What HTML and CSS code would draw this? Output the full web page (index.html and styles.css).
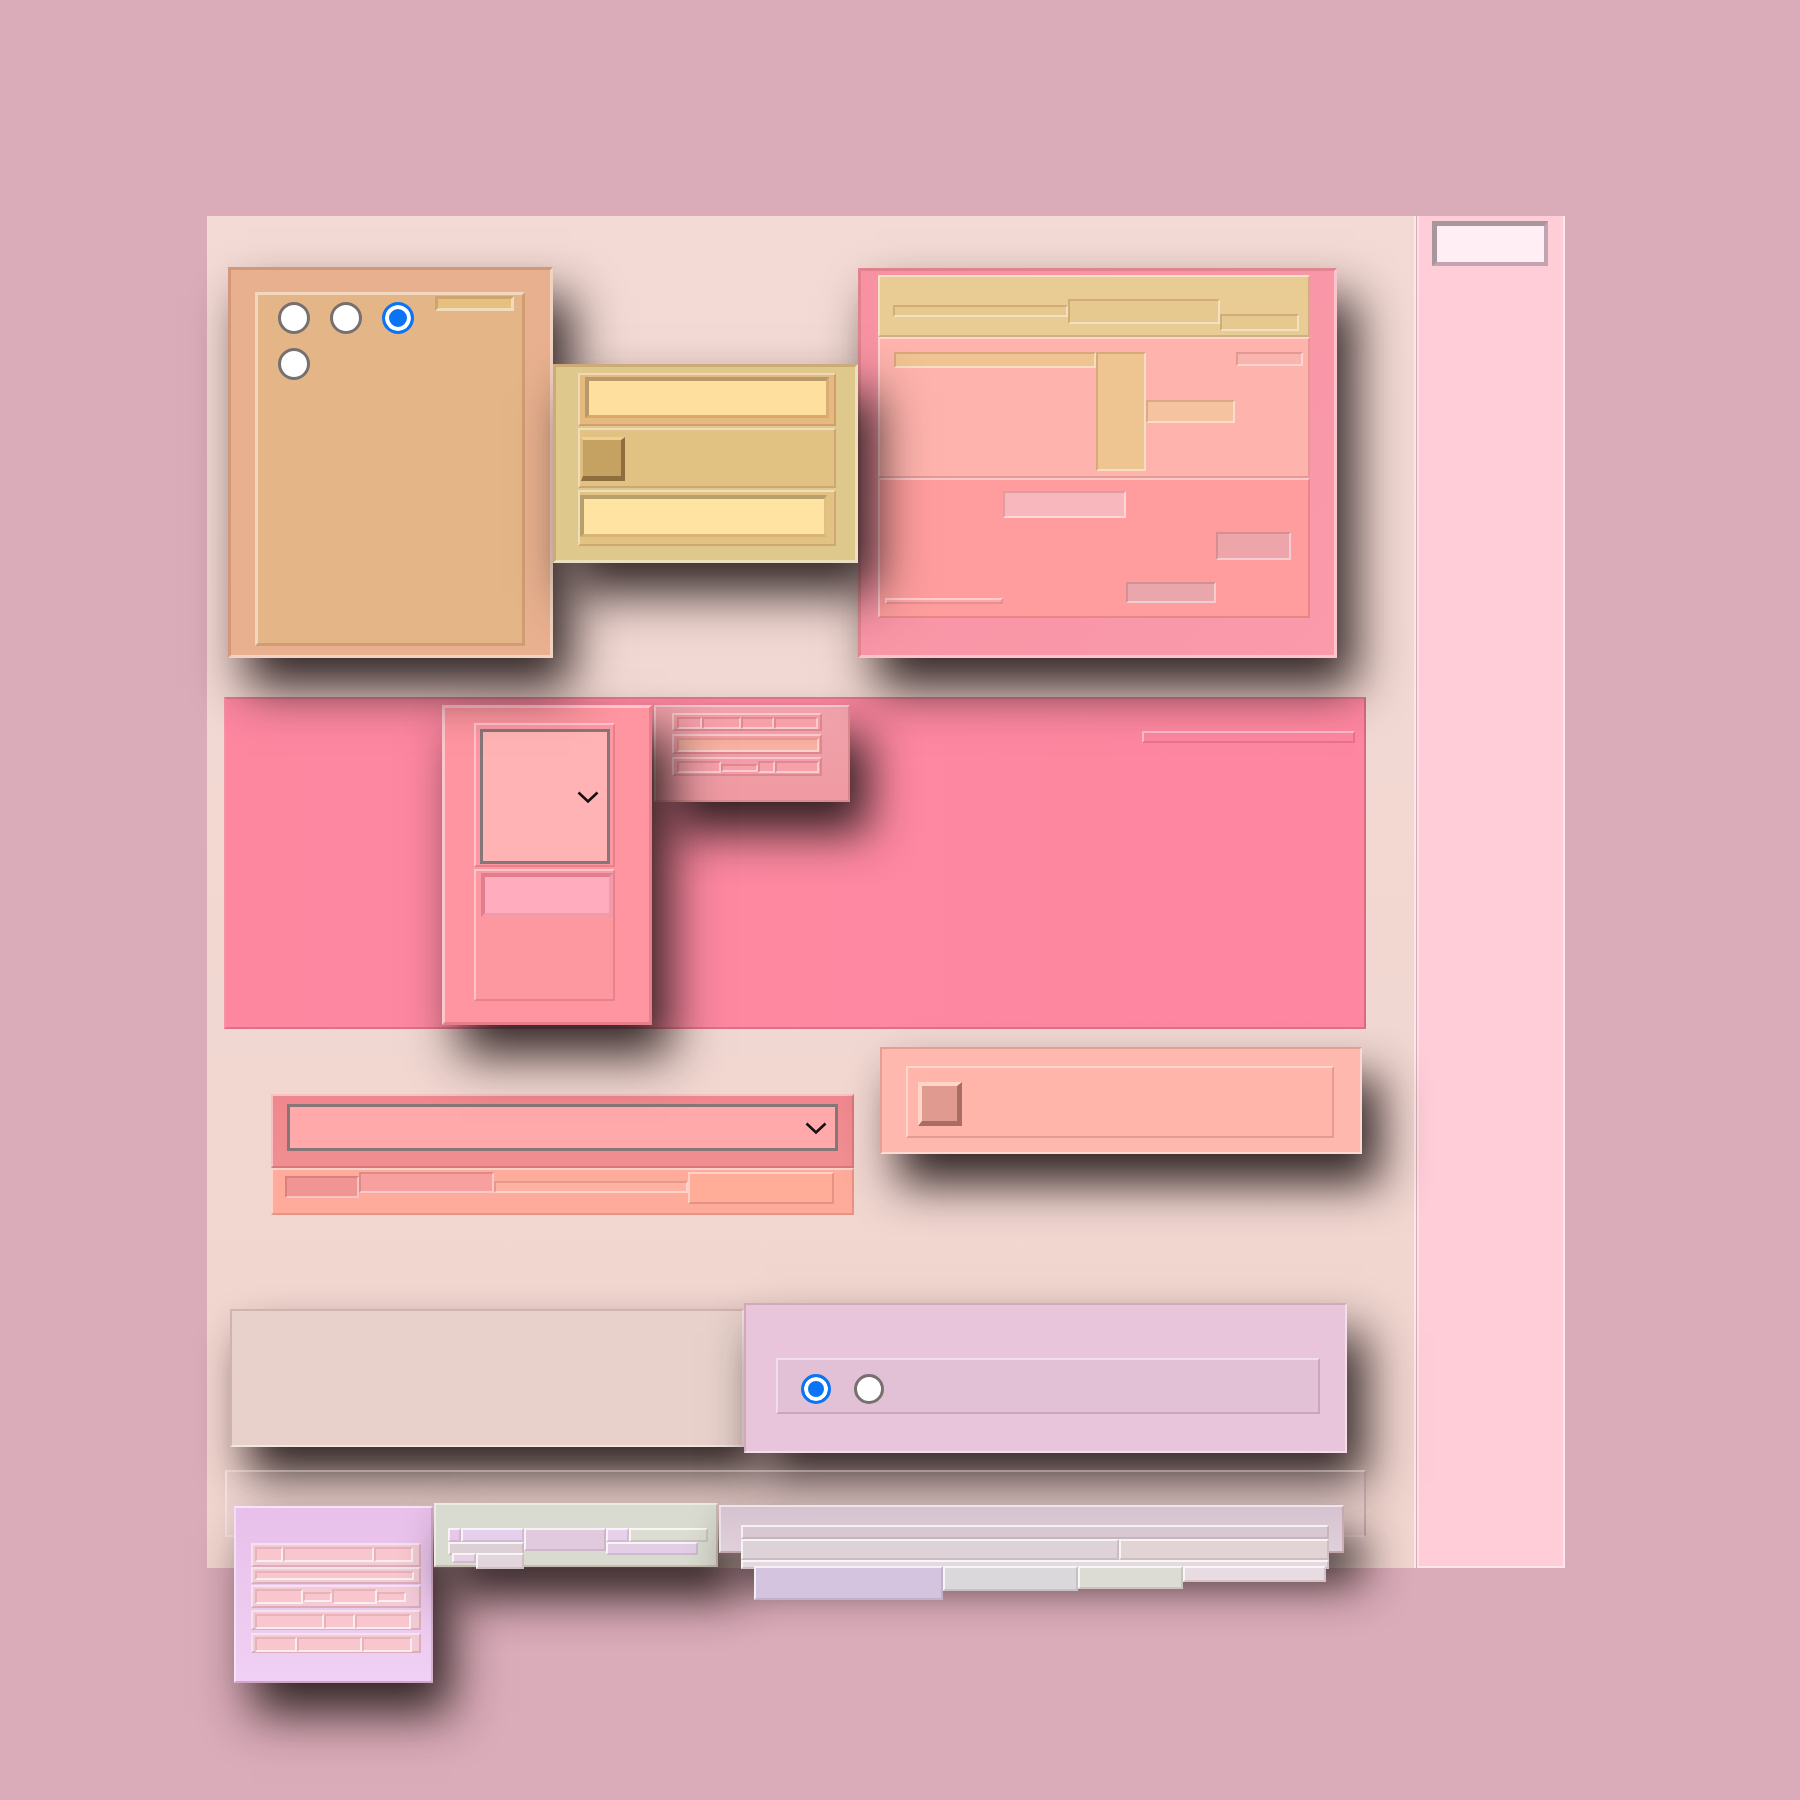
FILE: index.html
```html
<!DOCTYPE html>
<html>
<head>
<meta charset="utf-8">
<title>Panels</title>
<link rel="stylesheet" href="styles.css">
</head>
<body>
<div class="stage">
  <div class="canvas">
    <div class="row1">
      <div class="orange in b3 sh z3">
        <div class="panel-o out b3">
          <div class="radios">
            <span class="radio"></span><span class="radio"></span><span class="radio on"></span><span class="radio"></span>
          </div>
          <div class="obar in b3"></div>
        </div>
      </div>
      <div class="yellow in b3 sh z4">
        <div class="yrow yr1 out b2"><div class="yinput"></div></div>
        <div class="yrow yr2 out b2"><div class="check ychk"></div></div>
        <div class="yrow yr3 out b2"><div class="yinput yi3"></div></div>
      </div>
      <div class="red in b3 sh z3">
        <div class="rhead out b2">
          <div class="bar in hb1"></div><div class="bar in hb2"></div><div class="bar in hb3"></div>
        </div>
        <div class="rmid out b2">
          <div class="bar in mb1"></div><div class="bar in mb2"></div><div class="bar in mb3"></div><div class="bar in mb4"></div>
        </div>
        <div class="rbot out b2">
          <div class="bar out bb1"></div><div class="bar in bb2"></div><div class="bar in bb3"></div><div class="bar in bb4"></div>
        </div>
      </div>
    </div>

    <div class="band">
      <div class="icard out b3 sh">
        <div class="sframe out b2">
          <div class="select sel1">
            <svg class="chev" width="24" height="14" viewBox="0 0 24 14"><path d="M2.5 2.5 L12 11.5 L21.5 2.5" fill="none" stroke="#161010" stroke-width="2.6"/></svg>
          </div>
        </div>
        <div class="lframe out b2"><div class="linput"></div></div>
      </div>
      <div class="scard out b2 sh">
        <div class="srow out b2 sr1">
          <div class="bar in s25"></div><div class="bar in s39"></div><div class="bar in s33"></div><div class="bar in s44"></div>
        </div>
        <div class="srow out b2 sr2">
          <div class="bar in s142 sorange"></div>
        </div>
        <div class="srow out b2 sr3">
          <div class="bar in s44"></div><div class="bar in s37 sthin"></div><div class="bar in s17"></div><div class="bar in s44"></div>
        </div>
      </div>
      <div class="bbar out b2"></div>
    </div>

    <div class="row3">
      <div class="selgrp">
        <div class="sgtop out b2">
          <div class="select sel2">
            <svg class="chev" width="24" height="14" viewBox="0 0 24 14"><path d="M2.5 2.5 L12 11.5 L21.5 2.5" fill="none" stroke="#161010" stroke-width="2.6"/></svg>
          </div>
        </div>
        <div class="sgbot out b2">
          <div class="bar in g1"></div><div class="bar in g2"></div><div class="bar in g3"></div><div class="bar out g4"></div>
        </div>
      </div>
      <div class="ccard in b2 sh z2">
        <div class="cframe out b2"><div class="check cchk"></div></div>
      </div>
    </div>

    <div class="row4">
      <div class="beige in b2 sh z2"></div>
      <div class="lav in b2 sh z2">
        <div class="lframe2 out b2">
          <span class="radio r30 on"></span><span class="radio r30"></span>
        </div>
      </div>
    </div>

    <div class="row5">
      <div class="pcard out b2 sh">
        <div class="prow out b2 p1"><div class="bar in pb w28"></div><div class="bar in pb w91"></div><div class="bar in pb w39"></div></div>
        <div class="prow out b2 p2"><div class="bar in pb w159"></div></div>
        <div class="prow out b2 p3"><div class="bar in pb w48"></div><div class="bar in pb w29 pth"></div><div class="bar in pb w45"></div><div class="bar in pb w29 pth"></div></div>
        <div class="prow out b2 p4"><div class="bar in pb w69"></div><div class="bar in pb w31"></div><div class="bar in pb w56"></div></div>
        <div class="prow out b2 p5"><div class="bar in pb w42"></div><div class="bar in pb w65"></div><div class="bar in pb w50"></div></div>
      </div>
      <div class="gcard out b2 sh">
        <div class="gcol1">
          <div class="gline"><div class="bar out ga1"></div><div class="bar out ga2"></div></div>
          <div class="bar out gb1"></div>
          <div class="gline gc"><div class="bar out gc1"></div><div class="bar out gc2"></div></div>
        </div>
        <div class="bar out gcol2"></div>
        <div class="gcol3">
          <div class="gline"><div class="bar out ga3"></div><div class="bar out ga4"></div></div>
          <div class="bar out gb3"></div>
        </div>
      </div>
      <div class="lcard out b2 sh">
        <div class="bar out la"></div>
        <div class="gline"><div class="bar out lb1"></div><div class="bar out lb2"></div></div>
        <div class="bar out lc"></div>
        <div class="gline ld"><div class="bar out ld1"></div><div class="bar out ld2"></div><div class="bar out ld3"></div><div class="bar out ld4"></div></div>
      </div>
    </div>
  </div>
  <div class="sidebar">
    <div class="sbox"></div>
  </div>
</div>
</body>
</html>
```
FILE: styles.css
```css
* { box-sizing: border-box; }
html, body { margin: 0; padding: 0; }
body {
  width: 1800px; height: 1800px; overflow: hidden;
  background: #daabb8;
  font-family: "Liberation Sans", Arial, sans-serif;
}
.stage { display: flex; align-items: flex-start; padding: 216px 0 0 207px; gap: 1px; }
.canvas {
  position: relative; z-index: 0;
  width: 1209px; height: 1352px;
  background: linear-gradient(180deg, #f3dad4, #f1d5cf);
  border-right: 2px solid #fbe9e5;
}
.sidebar {
  width: 148px; height: 1352px;
  background: #fecdd7;
  border-left: 2px solid #ffdfe5; border-right: 2px solid #ffe6ec; border-bottom: 2px solid #ffe6ec;
  padding: 5px 0 0 13px;
}
.sbox {
  width: 116px; height: 45px; background: #ffeef4;
  border-style: solid; border-width: 5px 4px 4px 5px;
  border-color: #a8969e #c2a4b0 #c2a4b0 #a8969e;
}

/* bevels */
.out { border-style: solid; border-color: rgba(255,255,255,.45) rgba(110,30,20,.17) rgba(110,30,20,.17) rgba(255,255,255,.45); }
.in  { border-style: solid; border-color: rgba(110,30,20,.17) rgba(255,255,255,.45) rgba(255,255,255,.45) rgba(110,30,20,.17); }
.b2 { border-width: 2px; }
.b3 { border-width: 3px; }
.bar { border-width: 2px; }
.sh { position: relative; box-shadow: 18px 30px 46px rgba(34,24,24,.92); }
.z2 { z-index: 2; } .z3 { z-index: 3; } .z4 { z-index: 4; }

/* radios */
.radio { display: block; width: 32px; height: 32px; border-radius: 50%; background: #fff; border: 3px solid #767070; }
.radio.on { border: 3px solid #0b74f4; background: #0b74f4; box-shadow: inset 0 0 0 4px #fff; }
.radio.r30 { width: 30px; height: 30px; }

/* checkbox */
.check { width: 44px; height: 44px; border-style: solid; }
.ychk { background: #c6a262; border-width: 3px 4px 5px 2px; border-color: #ecd096 #8e6e3e #8e6e3e #dcbc7c; }
.cchk { background: #e09a90; border-width: 4px 5px 5px 4px; border-color: #ffd6c6 #a86e66 #a86e66 #ffd6c6; }

/* select */
.select { display: flex; align-items: center; justify-content: flex-end; border: 3px solid #857777; padding-right: 7px; }
.chev { display: block; }

/* row 1 */
.row1 { display: flex; align-items: flex-start; margin: 51px 0 0 21px; }
.orange { width: 325px; height: 391px; background: #e8b08e; padding: 22px 0 0 24px; }
.panel-o { width: 270px; height: 354px; background: #e4b687; display: flex; align-items: flex-start; padding: 1px 0 0 20px; }
.radios { display: grid; grid-template-columns: repeat(3, 32px); column-gap: 20px; row-gap: 14px; margin-top: 6px; }
.obar { width: 79px; height: 15px; margin-left: 21px; background: #e5c080; }

.yellow { width: 305px; height: 199px; margin-top: 97px; background: #dfc88c; padding: 6px 0 0 22px; display: flex; flex-direction: column; gap: 2px; }
.yrow { width: 258px; }
.yr1 { height: 53px; padding: 2px 0 0 5px; background: #e6b97e; }
.yr2 { height: 60px; padding: 7px 0 0 1px; background: #e2c282; }
.yr3 { height: 56px; padding: 3px 0 0 0; background: #e2c384; }
.yinput {
  width: 244px; height: 41px; background: #ffdf9e;
  border-style: solid; border-width: 4px 3px 3px 4px;
  border-color: #b89a68 #d6ae78 #d8a86c #b89a68;
}
.yi3 { width: 247px; height: 42px; background: #ffe3a2; border-color: #b8a06a #e2c080 #d8b478 #b8a06a; }

.red { width: 479px; height: 390px; margin-top: 1px; background: linear-gradient(135deg, #f892a2, #fa9aab); padding: 4px 0 0 17px; }
.rhead { width: 432px; height: 62px; background: #e8cc94; display: flex; align-items: flex-start; padding-left: 13px; }
.rhead .bar { background: #e6c98f; }
.hb1 { width: 175px; height: 12px; margin-top: 28px; }
.hb2 { width: 152px; height: 25px; margin-top: 22px; }
.hb3 { width: 79px; height: 17px; margin-top: 37px; }
.rmid { width: 432px; height: 141px; background: #ffb3ad; display: flex; align-items: flex-start; padding: 13px 0 0 14px; }
.mb1 { width: 202px; height: 16px; background: #f0c393; }
.mb2 { width: 50px; height: 119px; background: #eec491; }
.mb3 { width: 89px; height: 23px; margin-top: 48px; background: #f6c3a0; }
.mb4 { width: 67px; height: 14px; margin-left: 1px; background: #f9b4ae; }
.rbot { width: 432px; height: 140px; background: #ff9d9e; display: flex; align-items: flex-start; padding-left: 5px; }
.bb1 { width: 118px; height: 6px; margin-top: 118px; background: #ffa6a6; }
.bb2 { width: 123px; height: 27px; margin-top: 11px; background: #f8b7bc; }
.bb3 { width: 90px; height: 21px; margin-top: 102px; background: #e9a7ac; }
.bb4 { width: 75px; height: 28px; margin-top: 52px; background: #eea5aa; }

/* band */
.band {
  position: relative; z-index: 1;
  width: 1142px; height: 332px; margin: 39px 0 0 17px;
  background: linear-gradient(90deg, #fe87a0, #fd88a0 50%, #ff86a0);
  border: 2px solid; border-color: #e67890 #d86a82 #e0708a #f392a8;
  display: flex; align-items: flex-start; padding: 6px 0 0 216px;
}
.icard { z-index: 2; width: 210px; height: 320px; background: #fe95a0; padding: 15px 0 0 29px; }
.sframe { width: 141px; height: 144px; padding: 4px 0 0 4px; background: #fe97a2; }
.sel1 { width: 130px; height: 135px; background: #ffb3b4; }
.lframe { width: 141px; height: 132px; margin-top: 2px; padding: 2px 0 0 5px; background: #fe98a0; }
.linput {
  width: 132px; height: 44px; background: #ffacbe;
  border-style: solid; border-width: 4px;
  border-color: #e07e8e #f39aa8 #f39aa8 #e07e8e;
}
.scard { z-index: 1; width: 196px; height: 97px; margin-left: 2px; background: linear-gradient(180deg, #f0a2aa, #f09aa3); padding: 6px 0 0 16px; display: flex; flex-direction: column; gap: 3px; }
.srow { width: 150px; display: flex; align-items: flex-start; padding: 2px 0 0 3px; background: #f59ca6; }
.sr1 { height: 18px; } .sr2 { height: 20px; } .sr3 { height: 19px; }
.srow .bar { height: 12px; background: #f6a0aa; }
.s25 { width: 25px; } .s39 { width: 39px; } .s33 { width: 33px; } .s44 { width: 44px; } .s37 { width: 37px; } .s17 { width: 17px; }
.s142 { width: 142px; }
.sorange { height: 14px !important; background: linear-gradient(180deg, #f6aca0, #f8b4a2) !important; }
.sthin { height: 8px !important; margin-top: 3px; }
.bbar { width: 213px; height: 12px; margin: 26px 9px 0 auto; background: #fe86a0; }

/* row 3 */
.row3 { display: flex; align-items: flex-start; margin: 18px 0 0 64px; }
.selgrp { width: 583px; margin-top: 47px; }
.sgtop { height: 74px; background: linear-gradient(180deg, #ef888e, #f08e92); padding: 8px 0 0 14px; }
.sel2 { width: 551px; height: 47px; background: #ffa9aa; }
.sgbot { height: 47px; background: #ffab9c; display: flex; align-items: flex-start; padding-left: 12px; }
.g1 { width: 74px; height: 22px; margin-top: 6px; background: #f09494; }
.g2 { width: 135px; height: 21px; margin-top: 2px; background: #f8a0a0; }
.g3 { width: 194px; height: 12px; margin-top: 11px; background: #ffb2a2; }
.g4 { width: 146px; height: 32px; margin-top: 2px; background: #ffac98; }
.ccard { width: 482px; height: 107px; margin-left: 26px; background: #feb8ae; padding: 17px 0 0 24px; }
.cframe { width: 428px; height: 72px; background: #ffb5aa; padding: 14px 0 0 10px; }

/* row 4 */
.row4 { display: flex; align-items: flex-start; margin: 88px 0 0 23px; }
.beige { width: 514px; height: 138px; margin-top: 6px; background: #e8d1cb; }
.lav { width: 603px; height: 150px; background: #e8c5da; padding: 53px 0 0 30px; }
.lframe2 { width: 544px; height: 56px; background: #e2c1d6; display: flex; align-items: flex-start; gap: 23px; padding: 14px 0 0 23px; }

/* row 5 */
.row5 {
  position: relative; z-index: 3;
  width: 1141px; height: 67px; margin: 17px 0 0 18px;
  display: flex; align-items: flex-start; padding-left: 7px;
  background: rgba(255,240,245,.10);
  border: 2px solid; border-color: rgba(255,235,240,.35) rgba(150,110,120,.35) rgba(255,235,240,.55) rgba(255,235,240,.55);
}
.pcard { width: 199px; height: 177px; margin-top: 34px; background: linear-gradient(180deg, #e8c0ea, #f0d0f4); padding: 35px 0 0 15px; display: flex; flex-direction: column; }
.prow { width: 170px; display: flex; align-items: flex-start; padding: 2px 0 0 2px; background: #f2cad8; }
.p1 { height: 24px; } .p2 { height: 17px; } .p3 { height: 23px; margin-top: 1px; } .p4 { height: 20px; margin-top: 2px; } .p5 { height: 20px; margin-top: 3px; }
.pb { height: 15px; background: #f8c6cc; border-color: rgba(200,140,150,.35) rgba(255,255,255,.7) rgba(255,255,255,.7) rgba(200,140,150,.35); }
.p2 .pb { height: 9px; }
.pth { height: 10px; margin-top: 3px; }
.w28 { width: 28px; } .w91 { width: 91px; } .w39 { width: 39px; } .w159 { width: 159px; } .w48 { width: 48px; } .w29 { width: 29px; } .w45 { width: 45px; }
.w69 { width: 69px; } .w31 { width: 31px; } .w56 { width: 56px; } .w42 { width: 42px; } .w65 { width: 65px; } .w50 { width: 50px; }

.gcard { width: 284px; height: 64px; margin: 31px 0 0 1px; background: #d9dbd0; display: flex; align-items: flex-start; padding: 23px 0 0 12px; }
.gline { display: flex; align-items: flex-start; }
.gcard .bar, .lcard .bar { border-color: rgba(255,255,255,.75) rgba(150,120,130,.25) rgba(150,120,130,.25) rgba(255,255,255,.75); }
.gcol1 { width: 76px; }
.ga1 { width: 13px; height: 14px; background: #e8c8e8; }
.ga2 { width: 63px; height: 14px; background: #e4d0ec; }
.gb1 { width: 76px; height: 13px; background: #dcd0d6; }
.gc { margin-left: 4px; margin-top: -2px; }
.gc1 { width: 24px; height: 10px; background: #e6d2e2; }
.gc2 { width: 48px; height: 16px; background: #e2d6dc; }
.gcol2 { width: 82px; height: 23px; background: #e2cade; }
.gcol3 { width: 102px; }
.ga3 { width: 23px; height: 14px; background: #e6d0ea; }
.ga4 { width: 79px; height: 14px; background: #dcdcd2; }
.gb3 { width: 92px; height: 13px; background: #e2cfe6; }

.lcard { width: 625px; height: 48px; margin: 33px 0 0 1px; background: linear-gradient(180deg, #d6c2d0, #e0d0da); padding: 18px 0 0 20px; }
.la { width: 588px; height: 14px; background: #d8c8d2; }
.lb1 { width: 378px; height: 21px; background: #ddd2d8; }
.lb2 { width: 210px; height: 21px; background: #e2d4d4; }
.lc { width: 588px; height: 9px; background: #e6d8e0; }
.ld { margin: -3px 0 0 13px; }
.ld1 { width: 189px; height: 34px; background: #d4c4e0; }
.ld2 { width: 135px; height: 25px; background: #dad8da; }
.ld3 { width: 105px; height: 23px; background: #dcdcd4; }
.ld4 { width: 143px; height: 16px; background: #e8dce2; }
```
